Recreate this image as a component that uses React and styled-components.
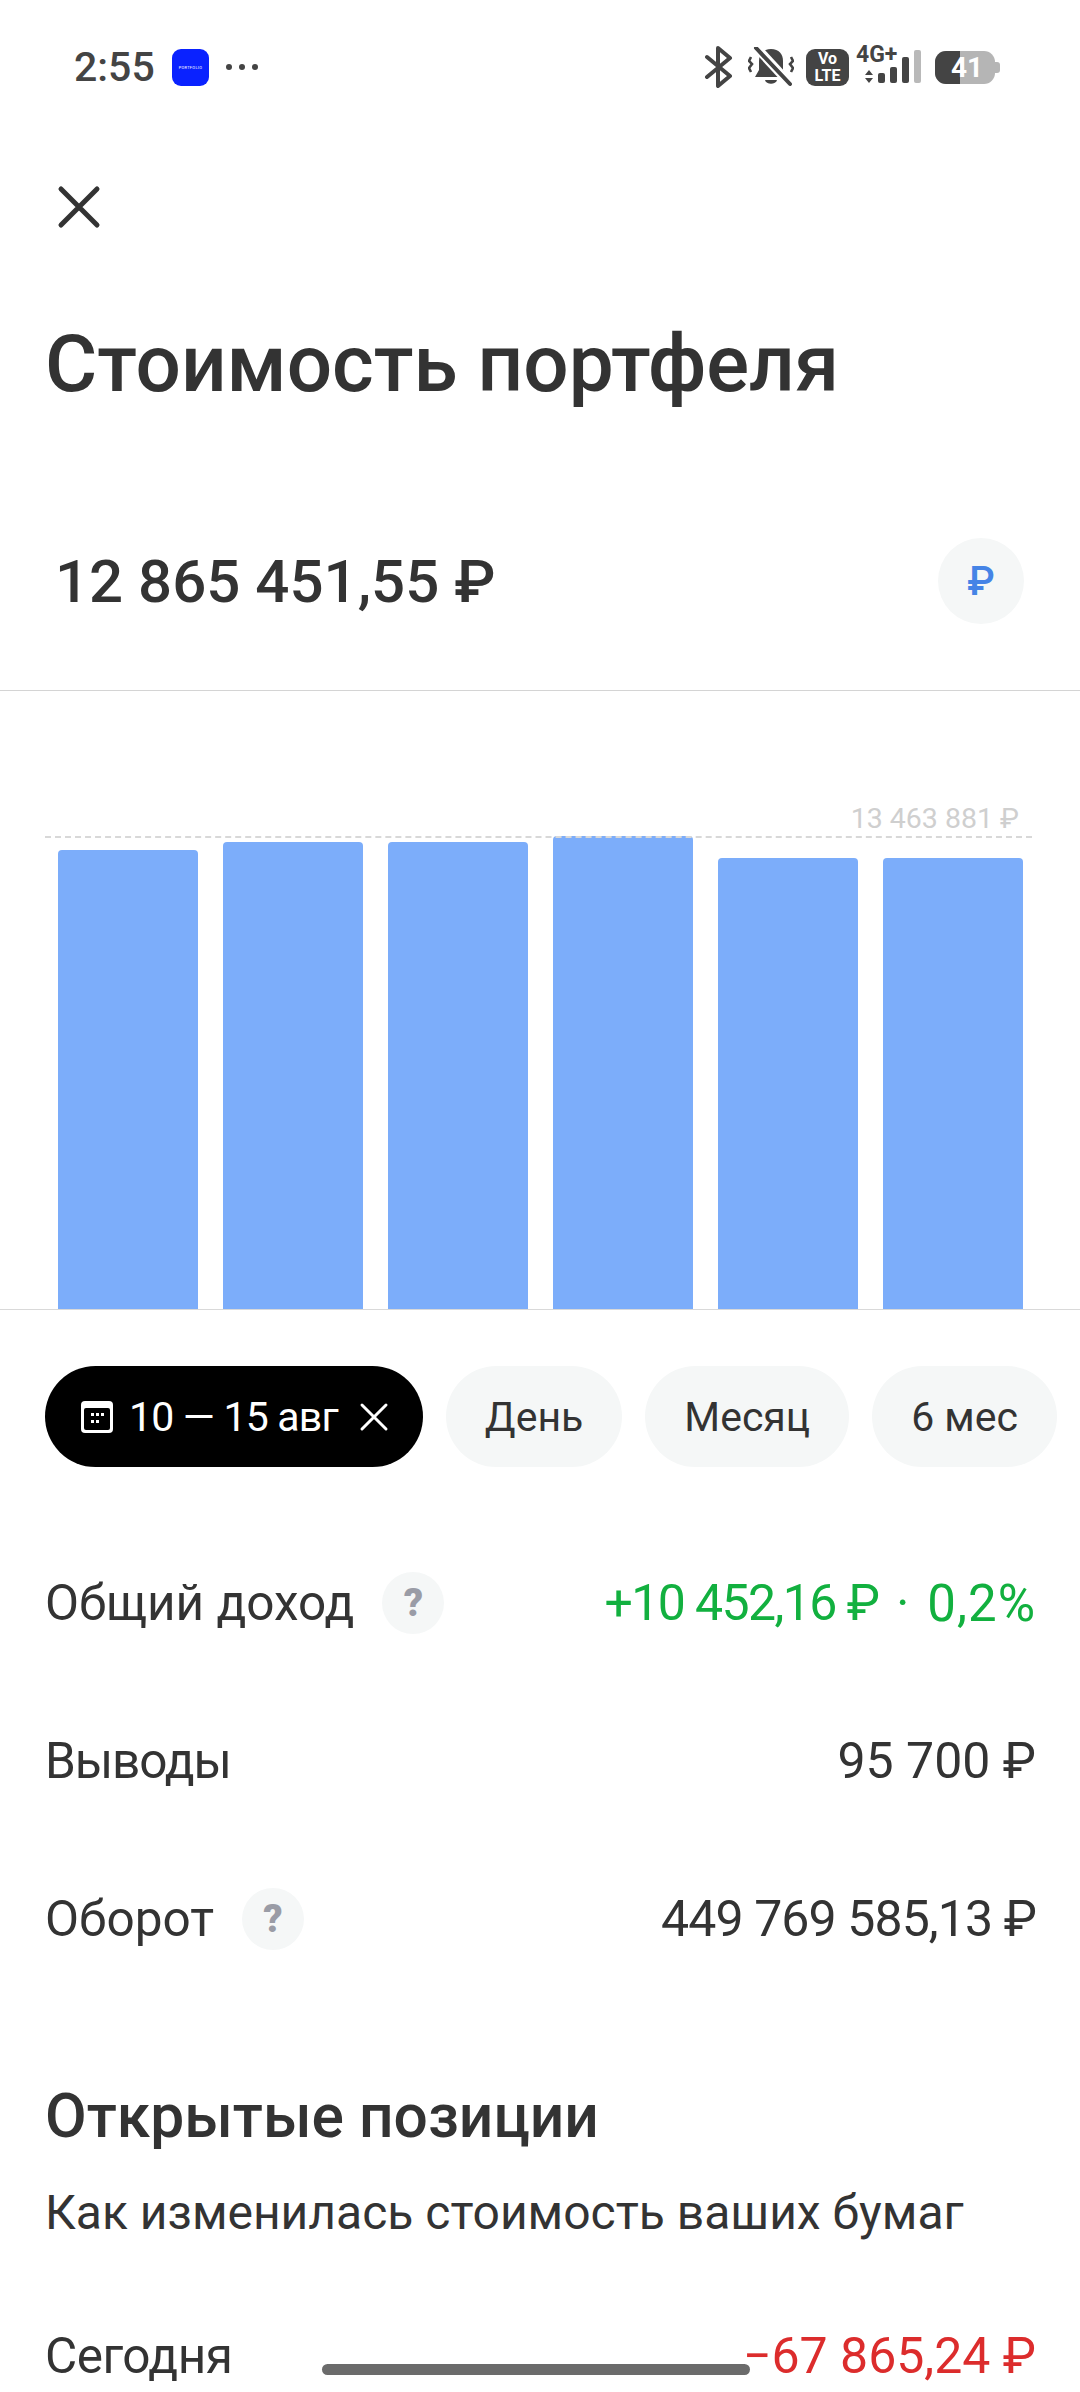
import styled, { createGlobalStyle } from "styled-components"

const Global = createGlobalStyle`
  html, body { margin: 0; padding: 0; background: #fff; }
  body { font-family: Roboto, "Noto Sans", sans-serif; color: #333; }
`

const bars = [459, 467, 467, 473, 451, 451]

const stats = [
  {
    label: "Общий доход",
    hint: true,
    value: "+10 452,16 ₽",
    percent: "0,2%",
    tone: "#12b03f",
    track: -1.6,
  },
  { label: "Выводы", value: "95 700 ₽", labelTrack: -1.1 },
  { label: "Оборот", hint: true, value: "449 769 585,13 ₽", track: -0.9 },
]

export default function App() {
  return (
    <Page>
      <Global />
      <StatusBar>
        <Time>2:55</Time>
        <AppIcon><AppIconText>PORTFOLIO</AppIconText></AppIcon>
        <Dots><i /><i /><i /></Dots>
        <StatusRight>
          <svg width="30" height="42" viewBox="0 0 30 42" fill="none" stroke="#444" strokeWidth="4" strokeLinejoin="round" strokeLinecap="round">
            <path d="M3 11 L26 30 L14 40 V2 L26 12 L3 31" />
          </svg>
          <BellIcon width="46" height="40" viewBox="0 0 46 40">
            <path d="M23 2c8 0 12 5 12 12v9l4 7H7l4-7v-9C11 7 15 2 23 2z" fill="#444" />
            <path d="M17 33h12c-1 5-11 5-12 0z" fill="#444" />
            <path d="M8 0 L43 38" stroke="#fff" strokeWidth="9" />
            <path d="M8 1 L42 37" stroke="#444" strokeWidth="4" strokeLinecap="round" />
            <path d="M3 10l-2 4 3 3-3 4 2 4M43 10l2 4-3 3 3 4-2 4" stroke="#444" strokeWidth="2.6" fill="none" />
          </BellIcon>
          <VoLte><span>Vo</span><span>LTE</span></VoLte>
          <Network>
            <NetworkLabel>4G+</NetworkLabel>
            <svg width="65" height="42" viewBox="0 0 65 42" fill="#444">
              <path d="M13 24l4 5H9zM13 37l4-5H9z" />
              <rect x="22" y="27" width="7" height="10" rx="2" />
              <rect x="34" y="21" width="7" height="16" rx="2" />
              <rect x="46" y="11" width="7" height="26" rx="2" />
              <rect x="58" y="4" width="7" height="33" rx="2" fill="#b9b9b9" />
            </svg>
          </Network>
          <Battery>
            <BatteryFill />
            <BatteryText>41</BatteryText>
            <BatteryCap />
          </Battery>
        </StatusRight>
      </StatusBar>

      <CloseRow>
        <svg width="44" height="44" viewBox="0 0 44 44" stroke="#333" strokeWidth="5" strokeLinecap="round">
          <path d="M4 4 L40 40 M40 4 L4 40" />
        </svg>
      </CloseRow>

      <Title>Стоимость портфеля</Title>

      <BalanceRow>
        <Balance>12 865 451,55 ₽</Balance>
        <CurrencyBadge>₽</CurrencyBadge>
      </BalanceRow>

      <Chart>
        <MaxLabel>13 463 881 ₽</MaxLabel>
        <MaxLine />
        {bars.map((h, i) => (
          <Bar key={i} $h={h} />
        ))}
      </Chart>

      <Pills>
        <Pill $active>
          <svg width="36" height="36" viewBox="0 0 36 36" fill="none">
            <rect x="2" y="2" width="32" height="32" rx="4" fill="#fff" />
            <rect x="5" y="9" width="26" height="22" rx="2" fill="#000" />
            <g fill="#fff">
              <rect x="12" y="14" width="3" height="3" /><rect x="17" y="14" width="3" height="3" /><rect x="22" y="14" width="3" height="3" />
              <rect x="12" y="21" width="3" height="3" /><rect x="17" y="21" width="3" height="3" />
            </g>
          </svg>
          <PillText>10 — 15 авг</PillText>
          <svg width="30" height="30" viewBox="0 0 30 30" stroke="#fff" strokeWidth="3" strokeLinecap="round">
            <path d="M3 3 L27 27 M27 3 L3 27" />
          </svg>
        </Pill>
        <Pill>День</Pill>
        <Pill>Месяц</Pill>
        <Pill>6 мес</Pill>
        <Pill $ghost />
      </Pills>

      {stats.map((s) => (
        <Row key={s.label}>
          <RowLabel $track={s.labelTrack}>
            {s.label}
            {s.hint && <Hint>?</Hint>}
          </RowLabel>
          <RowValue $tone={s.tone} $track={s.track}>
            {s.value}
            {s.percent && <Percent>·</Percent>}
            {s.percent && <Percent $wide>{s.percent}</Percent>}
          </RowValue>
        </Row>
      ))}

      <Heading>Открытые позиции</Heading>
      <Sub>Как изменилась стоимость ваших бумаг</Sub>
      <TodayRow>
        <RowLabel $track={-0.5}>Сегодня</RowLabel>
        <RowValue $tone="#dc2c2c">−67 865,24 ₽</RowValue>
      </TodayRow>

      <HomeBar />
    </Page>
  )
}

const Page = styled.div`
  position: relative;
  width: 1080px;
  height: 2392px;
  overflow: hidden;
  background: #fff;
`

const StatusBar = styled.div`
  display: flex;
  align-items: center;
  height: 134px;
  padding: 0 80px 0 74px;
  box-sizing: border-box;
`

const Time = styled.span`
  font-size: 41px;
  font-weight: 500;
  color: #444;
  width: 98px;
`

const AppIcon = styled.div`
  display: flex;
  align-items: center;
  justify-content: center;
  width: 37px;
  height: 37px;
  border-radius: 9px;
  background: #0a22ff;
`

const AppIconText = styled.span`
  font-size: 4px;
  color: #fff;
  letter-spacing: 0.3px;
`

const Dots = styled.div`
  display: flex;
  gap: 7px;
  margin-left: 17px;

  i {
    width: 6px;
    height: 6px;
    border-radius: 50%;
    background: #444;
  }
`

const StatusRight = styled.div`
  display: flex;
  align-items: center;
  margin-left: auto;
  gap: 12px;
`

const BellIcon = styled.svg`
  margin-left: 2px;
`

const VoLte = styled.div`
  display: flex;
  flex-direction: column;
  align-items: center;
  justify-content: center;
  width: 43px;
  height: 37px;
  border-radius: 9px;
  background: #444;
  color: #fff;
  font-size: 16px;
  font-weight: 700;
  line-height: 17px;
`

const Network = styled.div`
  position: relative;
  width: 65px;
  height: 42px;
  margin-left: -5px;
`

const NetworkLabel = styled.span`
  position: absolute;
  left: 0;
  top: -4px;
  font-size: 23px;
  line-height: 26px;
  font-weight: 700;
  color: #444;
`

const Battery = styled.div`
  position: relative;
  width: 60px;
  height: 33px;
  margin: 0 5px 0 2px;
  border-radius: 11px;
  background: #b5b5b5;
`

const BatteryFill = styled.div`
  width: 25px;
  height: 100%;
  border-radius: 11px 0 0 11px;
  background: #444;
`

const BatteryText = styled.span`
  position: absolute;
  left: 16px;
  top: 0;
  font-size: 28px;
  line-height: 33px;
  font-weight: 700;
  color: #fff;
`

const BatteryCap = styled.div`
  position: absolute;
  right: -5px;
  top: 11px;
  width: 5px;
  height: 11px;
  border-radius: 0 3px 3px 0;
  background: #b5b5b5;
`

const CloseRow = styled.div`
  display: flex;
  padding-left: 57px;
  margin-top: 51px;
  height: 44px;
`

const Title = styled.h1`
  margin: 87px 0 0 45px;
  height: 96px;
  font-size: 80px;
  line-height: 96px;
  font-weight: 500;
  color: #333;
  white-space: nowrap;
`

const BalanceRow = styled.div`
  display: flex;
  align-items: center;
  justify-content: space-between;
  height: 86px;
  margin-top: 126px;
  padding: 0 56px 0 55px;
`

const Balance = styled.div`
  font-size: 60px;
  font-weight: 500;
  color: #333;
`

const CurrencyBadge = styled.div`
  display: flex;
  align-items: center;
  justify-content: center;
  width: 86px;
  height: 86px;
  border-radius: 50%;
  background: #f5f7f7;
  color: #4584e6;
  font-size: 40px;
  font-weight: 500;
`

const Chart = styled.div`
  position: relative;
  display: flex;
  align-items: flex-end;
  gap: 25px;
  height: 620px;
  margin-top: 66px;
  padding-left: 58px;
  box-sizing: border-box;
  border-top: 1px solid #d4d4d4;
  border-bottom: 1px solid #d9d9d9;
`

const Bar = styled.div`
  width: 140px;
  height: ${(p) => p.$h}px;
  border-radius: 4px 4px 0 0;
  background: #7cadfa;
`

const MaxLine = styled.div`
  position: absolute;
  left: 45px;
  right: 48px;
  top: 145px;
  border-top: 2px dashed #d8d8d8;
`

const MaxLabel = styled.span`
  position: absolute;
  right: 61px;
  top: 111px;
  font-size: 28.5px;
  color: #cfcfcf;
`

const Pills = styled.div`
  display: flex;
  gap: 23px;
  margin: 56px 0 57px 45px;
  white-space: nowrap;
`

const Pill = styled.div`
  flex: none;
  display: flex;
  align-items: center;
  gap: 14px;
  width: ${(p) => (p.$ghost ? "120px" : "auto")};
  height: 101px;
  padding: 0 ${(p) => (p.$active ? "34px" : "39px")};
  box-sizing: border-box;
  border-radius: 51px;
  background: ${(p) => (p.$active ? "#000" : "#f5f7f7")};
  color: ${(p) => (p.$active ? "#fff" : "#333")};
  font-size: 41px;
`

const PillText = styled.span`
  margin-right: 7px;
  letter-spacing: -0.8px;
`

const Row = styled.div`
  display: flex;
  align-items: center;
  justify-content: space-between;
  height: 158px;
  padding: 0 44px 0 45px;
`

const RowLabel = styled.div`
  display: flex;
  align-items: center;
  gap: 28px;
  font-size: 49.5px;
  letter-spacing: ${(p) => p.$track || 0}px;
  color: #333;
`

const RowValue = styled.div`
  display: flex;
  align-items: center;
  font-size: 50px;
  color: ${(p) => p.$tone || "#333"};
  letter-spacing: ${(p) => p.$track || 0}px;
  white-space: pre;
`

const Percent = styled.span`
  margin-left: 18px;
  letter-spacing: ${(p) => (p.$wide ? "1px" : "0")};
  font-size: ${(p) => (p.$wide ? "51px" : "50px")};
`

const Hint = styled.span`
  display: flex;
  align-items: center;
  justify-content: center;
  width: 62px;
  height: 62px;
  border-radius: 50%;
  background: #f5f7f7;
  color: #9a9ca6;
  font-size: 38px;
  font-weight: 900;
  letter-spacing: 0;
`

const Heading = styled.h2`
  margin: 79px 0 0 45px;
  height: 80px;
  font-size: 60.5px;
  line-height: 80px;
  font-weight: 500;
  color: #333;
`

const Sub = styled.div`
  margin: 26px 0 0 45px;
  height: 60px;
  font-size: 48px;
  line-height: 60px;
  color: #333;
`

const TodayRow = styled(Row)`
  margin-top: 34px;
`

const HomeBar = styled.div`
  position: absolute;
  left: 322px;
  bottom: 17px;
  width: 428px;
  height: 11px;
  border-radius: 6px;
  background: #6b6b6b;
`
